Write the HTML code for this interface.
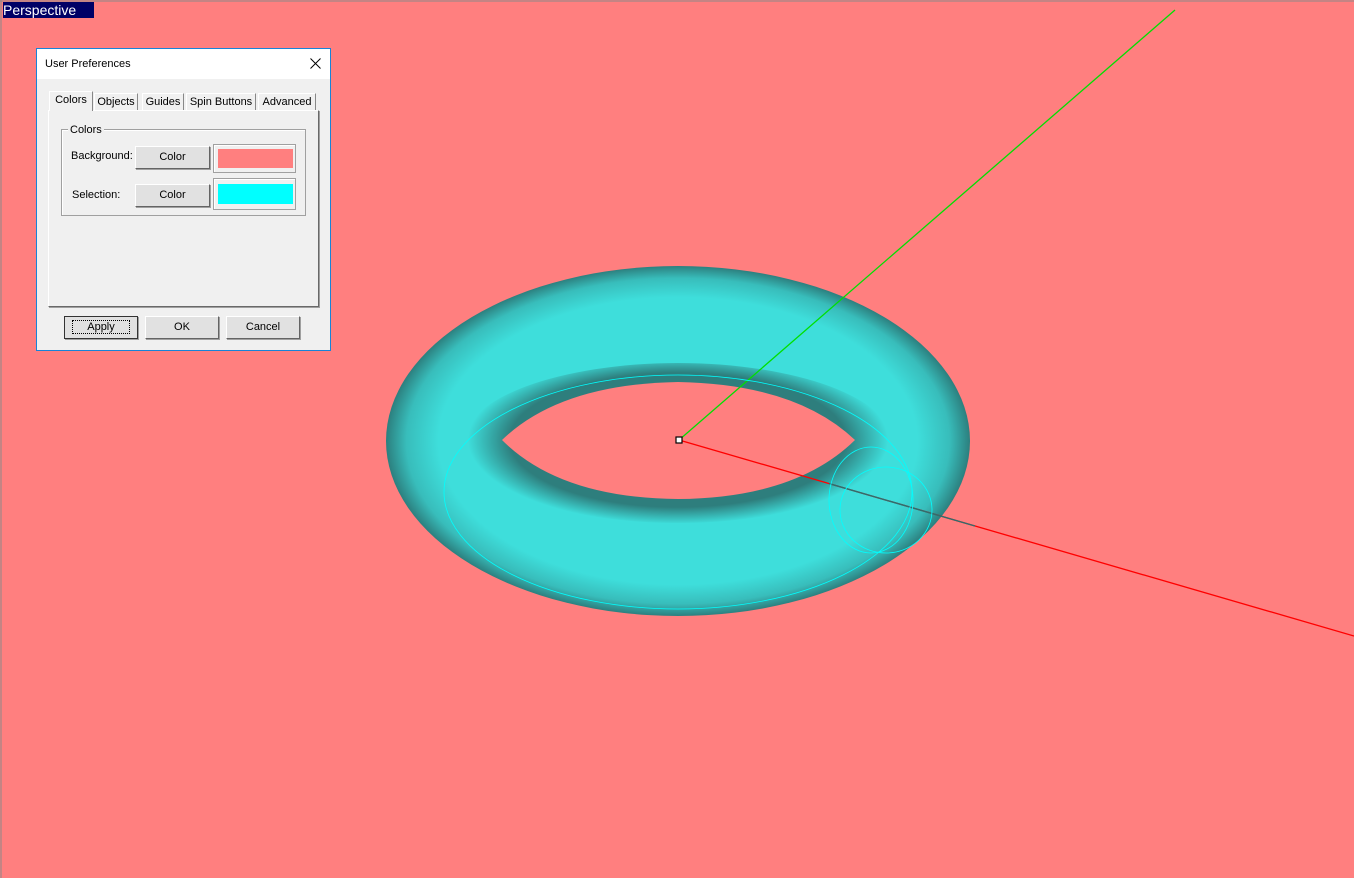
<!DOCTYPE html>
<html><head><style>
body{margin:0;width:1354px;height:878px;overflow:hidden;background:#FF7F7F;font-family:"Liberation Sans",sans-serif;position:relative}
.abs{position:absolute}
.btn{position:absolute;background:#e1e1e1;border:1px solid #fff;border-right-color:#646464;border-bottom-color:#646464;box-shadow:1px 1px 0 #a0a0a0;font-size:11px;text-align:center;line-height:20px;color:#000;box-sizing:border-box}
.tab{position:absolute;top:93px;height:17px;font-size:11px;line-height:17px;border:1px solid #fff;border-right-color:#888;border-bottom:none;background:#f0f0f0;text-align:center;box-sizing:border-box}
</style></head><body>
<svg class="abs" style="left:0;top:0" width="1354" height="878">
<defs>
<radialGradient id="g" cx="678" cy="441" r="292" gradientUnits="userSpaceOnUse" gradientTransform="translate(678 441) scale(1 0.6) translate(-678 -441)">
<stop offset="0.82" stop-color="#3EDEDB"/><stop offset="0.93" stop-color="#38BDBB"/><stop offset="1" stop-color="#2C7F7E"/></radialGradient>
<radialGradient id="h" cx="678" cy="440" r="210" gradientUnits="userSpaceOnUse" gradientTransform="translate(678 440) scale(1 0.4) translate(-678 -440)">
<stop offset="0.8" stop-color="#2E7E7D"/><stop offset="1" stop-color="#2E7E7D" stop-opacity="0"/></radialGradient>
</defs>
<line x1="1" y1="0" x2="1" y2="878" stroke="#888"/>
<line x1="0" y1="1" x2="1354" y2="1" stroke="#888"/>
<ellipse cx="678" cy="441" rx="292" ry="175" fill="url(#g)"/>
<ellipse cx="678" cy="443" rx="215" ry="80" fill="url(#h)"/>
<path d="M502 440 Q560 384 678 382 Q796 384 855 440 Q796 498 678 499 Q560 498 502 440 Z" fill="#FF7F7F"/>
<line x1="679" y1="440" x2="1175" y2="10" stroke="#00E000" stroke-width="1.3"/>
<line x1="679" y1="440" x2="1354" y2="636" stroke="#FF0000" stroke-width="1.3"/>
<line x1="829" y1="483.6" x2="975" y2="526" stroke="#2E6E6E" stroke-width="1.4"/>
<ellipse cx="678" cy="492" rx="234" ry="117" fill="none" stroke="#00FFFF" stroke-width="0.8"/>
<ellipse cx="871" cy="500" rx="42" ry="53" fill="none" stroke="#00FFFF" stroke-width="0.8"/>
<ellipse cx="886" cy="510" rx="46" ry="43" fill="none" stroke="#00FFFF" stroke-width="0.8"/>
<rect x="676" y="437" width="6" height="6" fill="#fff" stroke="#000" stroke-width="1.2"/>
</svg>
<div class="abs" style="left:3px;top:2px;width:91px;height:16px;background:#000066;color:#fff;font-size:14px;line-height:16px">Perspective</div>
<div class="abs" style="left:36px;top:48px;width:295px;height:303px;border:1px solid #1883D7;box-sizing:border-box;background:#f0f0f0">
<div class="abs" style="left:0;top:0;width:293px;height:30px;background:#fff;font-size:11px;line-height:30px"><span style="margin-left:8px">User Preferences</span>
<svg class="abs" style="right:9px;top:9px" width="11" height="11"><path d="M0.5 0.5L10.5 10.5M10.5 0.5L0.5 10.5" stroke="#000" stroke-width="1"/></svg></div>
</div>
<div class="abs" style="left:48px;top:110px;width:271px;height:197px;border:1px solid #fff;border-right-color:#696969;border-bottom-color:#696969;box-sizing:border-box;box-shadow:1px 1px 0 #a0a0a0"></div>
<div class="tab" style="left:49px;top:91px;height:20px;width:44px;background:#f0f0f0;z-index:2">Colors</div>
<div class="tab" style="left:94px;width:44px">Objects</div>
<div class="tab" style="left:142px;width:42px">Guides</div>
<div class="tab" style="left:186px;width:70px">Spin Buttons</div>
<div class="tab" style="left:258px;width:58px">Advanced</div>
<div class="abs" style="left:61px;top:129px;width:245px;height:87px;border:1px solid #a0a0a0;box-shadow:1px 1px 0 #fff inset;box-sizing:border-box"></div>
<div class="abs" style="left:68px;top:124px;background:#f0f0f0;font-size:11px;padding:0 2px">Colors</div>
<div class="abs" style="left:71px;top:150px;font-size:11px">Background:</div>
<div class="abs" style="left:72px;top:189px;font-size:11px">Selection:</div>
<div class="btn" style="left:135px;top:146px;width:75px;height:23px;line-height:21px">Color</div>
<div class="btn" style="left:135px;top:184px;width:75px;height:23px;line-height:21px">Color</div>
<div class="abs" style="left:213px;top:144px;width:83px;height:29px;border:1px solid #a0a0a0;box-sizing:border-box;box-shadow:inset 1px 1px 0 #fff"><div class="abs" style="left:4px;top:4px;width:75px;height:19px;background:#FF7F7F"></div></div>
<div class="abs" style="left:213px;top:178px;width:83px;height:32px;border:1px solid #a0a0a0;box-sizing:border-box;box-shadow:inset 1px 1px 0 #fff"><div class="abs" style="left:4px;top:5px;width:75px;height:20px;background:#00FFFF"></div></div>
<div class="btn" style="left:64px;top:316px;width:74px;height:23px;line-height:21px;border:1px solid #333"><span style="outline:1px dotted #000;padding:0 14px">Apply</span></div>
<div class="btn" style="left:145px;top:316px;width:74px;height:23px;line-height:21px">OK</div>
<div class="btn" style="left:226px;top:316px;width:74px;height:23px;line-height:21px">Cancel</div>
</body></html>
